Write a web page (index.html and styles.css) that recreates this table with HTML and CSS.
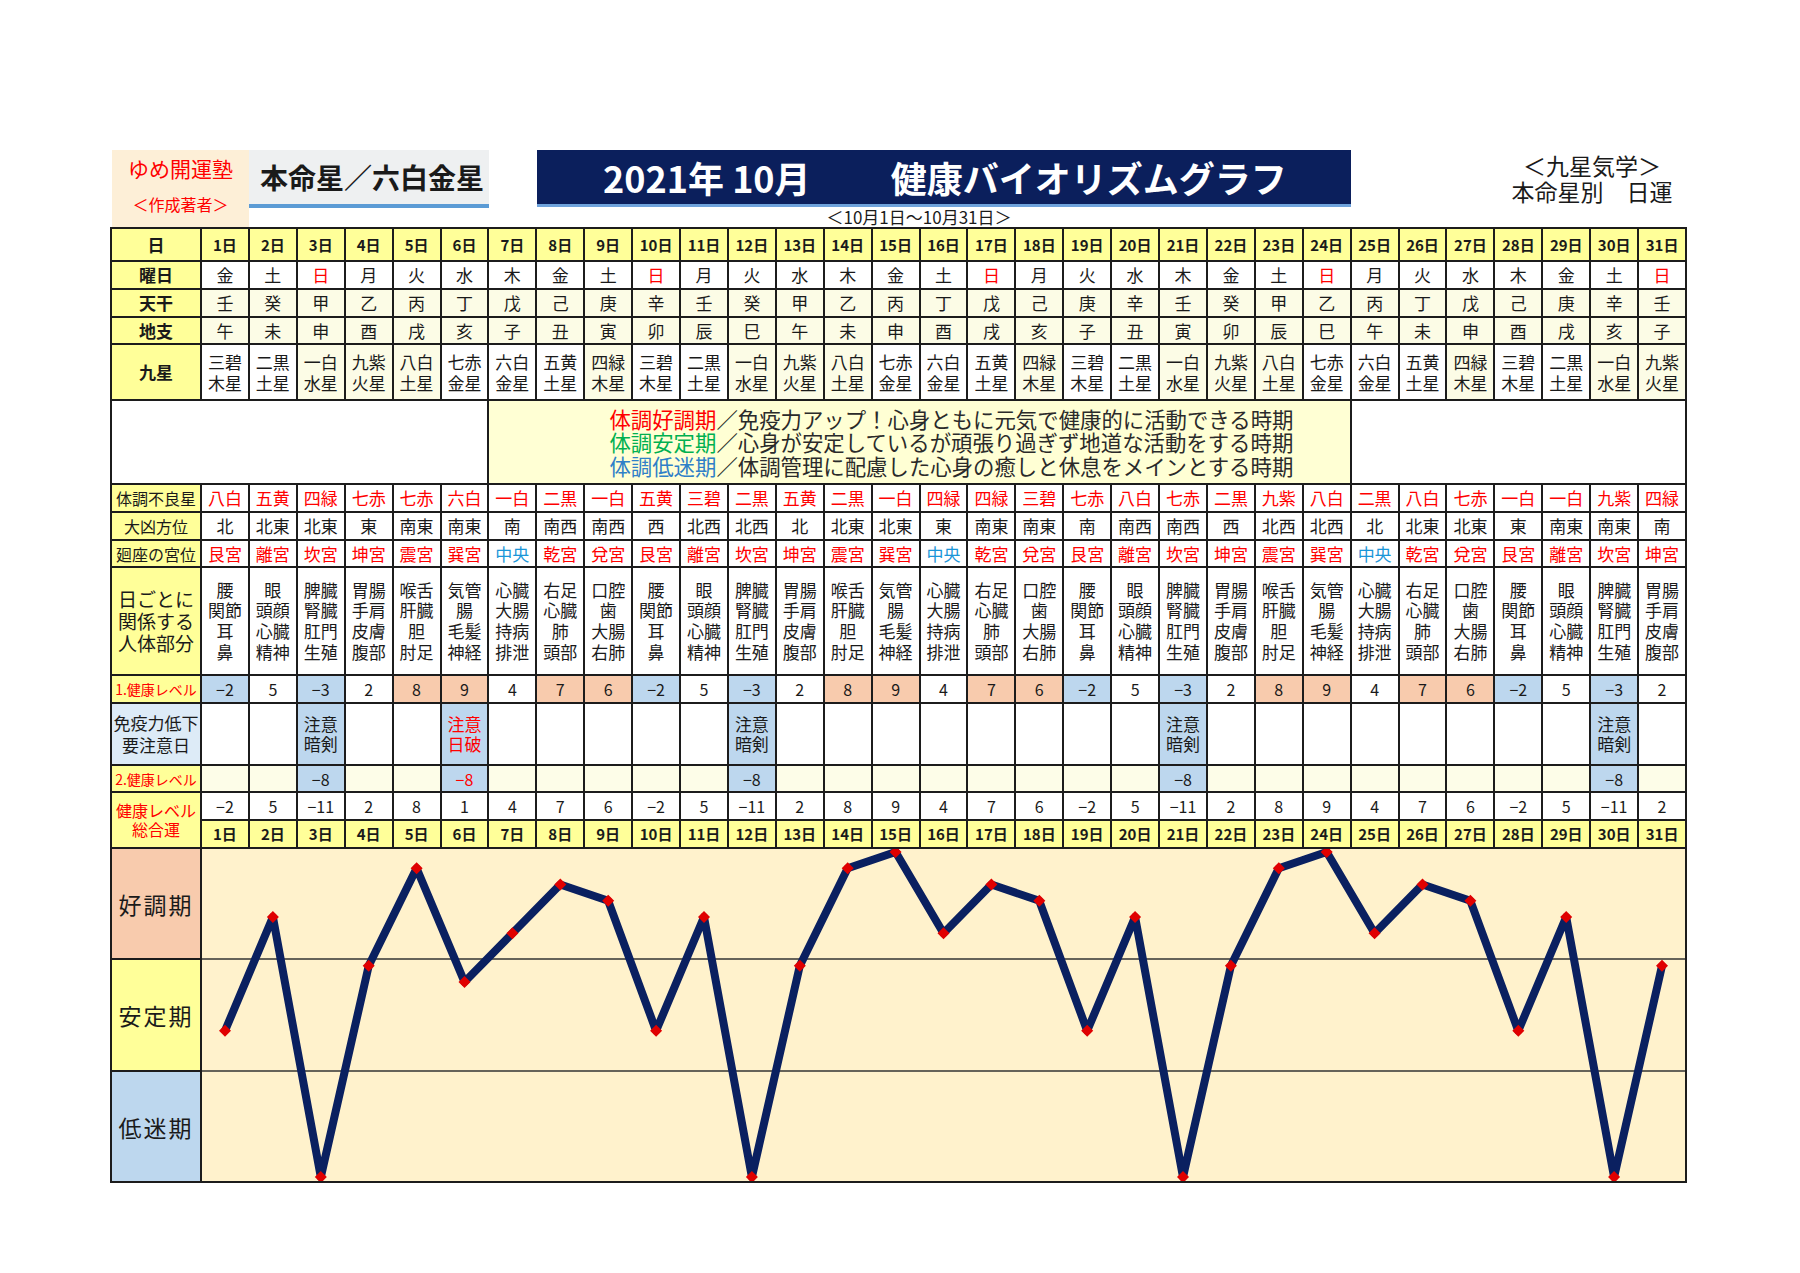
FILE: index.html
```html
<!DOCTYPE html>
<html lang="ja">
<head>
<meta charset="utf-8">
<title>健康バイオリズムグラフ</title>
<link rel="stylesheet" href="styles.css">
</head>
<body>
<div class="page">
  <div class="header">
    <div class="author"><div class="name">ゆめ開運塾</div><div class="role">＜作成著者＞</div></div>
    <div class="honmei">本命星／六白金星</div>
    <div class="title-col">
      <div class="title"><span class="ym">2021年 10月</span><span class="tname">健康バイオリズムグラフ</span></div>
      <div class="caption">＜10月1日～10月31日＞</div>
    </div>
    <div class="kyusei"><div>＜九星気学＞</div><div>本命星別　日運</div></div>
  </div>

  <div class="sheet">
    <!-- row 1 -->
    <div class="lb hd">日</div>
    <div class="dn">1日</div><div class="dn">2日</div><div class="dn">3日</div><div class="dn">4日</div><div class="dn">5日</div><div class="dn">6日</div><div class="dn">7日</div><div class="dn">8日</div><div class="dn">9日</div><div class="dn">10日</div><div class="dn">11日</div><div class="dn">12日</div><div class="dn">13日</div><div class="dn">14日</div><div class="dn">15日</div><div class="dn">16日</div><div class="dn">17日</div><div class="dn">18日</div><div class="dn">19日</div><div class="dn">20日</div><div class="dn">21日</div><div class="dn">22日</div><div class="dn">23日</div><div class="dn">24日</div><div class="dn">25日</div><div class="dn">26日</div><div class="dn">27日</div><div class="dn">28日</div><div class="dn">29日</div><div class="dn">30日</div><div class="dn">31日</div>
    <!-- row 2 -->
    <div class="lb hd">曜日</div>
    <div>金</div><div>土</div><div class="red">日</div><div>月</div><div>火</div><div>水</div><div>木</div>
    <div>金</div><div>土</div><div class="red">日</div><div>月</div><div>火</div><div>水</div><div>木</div>
    <div>金</div><div>土</div><div class="red">日</div><div>月</div><div>火</div><div>水</div><div>木</div>
    <div>金</div><div>土</div><div class="red">日</div><div>月</div><div>火</div><div>水</div><div>木</div>
    <div>金</div><div>土</div><div class="red">日</div>
    <!-- row 3 -->
    <div class="lb hd">天干</div>
    <div class="cr">壬</div><div class="cr">癸</div><div class="cr">甲</div><div class="cr">乙</div><div class="cr">丙</div><div class="cr">丁</div><div class="cr">戊</div><div class="cr">己</div><div class="cr">庚</div><div class="cr">辛</div>
    <div class="cr">壬</div><div class="cr">癸</div><div class="cr">甲</div><div class="cr">乙</div><div class="cr">丙</div><div class="cr">丁</div><div class="cr">戊</div><div class="cr">己</div><div class="cr">庚</div><div class="cr">辛</div>
    <div class="cr">壬</div><div class="cr">癸</div><div class="cr">甲</div><div class="cr">乙</div><div class="cr">丙</div><div class="cr">丁</div><div class="cr">戊</div><div class="cr">己</div><div class="cr">庚</div><div class="cr">辛</div>
    <div class="cr">壬</div>
    <!-- row 4 -->
    <div class="lb hd">地支</div>
    <div class="cr">午</div><div class="cr">未</div><div class="cr">申</div><div class="cr">酉</div><div class="cr">戌</div><div class="cr">亥</div><div class="cr">子</div><div class="cr">丑</div><div class="cr">寅</div><div class="cr">卯</div><div class="cr">辰</div><div class="cr">巳</div>
    <div class="cr">午</div><div class="cr">未</div><div class="cr">申</div><div class="cr">酉</div><div class="cr">戌</div><div class="cr">亥</div><div class="cr">子</div><div class="cr">丑</div><div class="cr">寅</div><div class="cr">卯</div><div class="cr">辰</div><div class="cr">巳</div>
    <div class="cr">午</div><div class="cr">未</div><div class="cr">申</div><div class="cr">酉</div><div class="cr">戌</div><div class="cr">亥</div><div class="cr">子</div>
    <!-- row 5 -->
    <div class="lb hd">九星</div>
    <div class="st">三碧<br>木星</div><div class="st">二黒<br>土星</div><div class="st cr">一白<br>水星</div><div class="st cr">九紫<br>火星</div><div class="st cr">八白<br>土星</div><div class="st">七赤<br>金星</div><div class="st">六白<br>金星</div><div class="st">五黄<br>土星</div><div class="st cr">四緑<br>木星</div>
    <div class="st">三碧<br>木星</div><div class="st">二黒<br>土星</div><div class="st cr">一白<br>水星</div><div class="st cr">九紫<br>火星</div><div class="st cr">八白<br>土星</div><div class="st">七赤<br>金星</div><div class="st">六白<br>金星</div><div class="st">五黄<br>土星</div><div class="st cr">四緑<br>木星</div>
    <div class="st">三碧<br>木星</div><div class="st">二黒<br>土星</div><div class="st cr">一白<br>水星</div><div class="st cr">九紫<br>火星</div><div class="st cr">八白<br>土星</div><div class="st">七赤<br>金星</div><div class="st">六白<br>金星</div><div class="st">五黄<br>土星</div><div class="st cr">四緑<br>木星</div>
    <div class="st">三碧<br>木星</div><div class="st">二黒<br>土星</div><div class="st cr">一白<br>水星</div><div class="st cr">九紫<br>火星</div>
    <!-- row 6 -->
    <div class="span7"></div>
    <div class="msg">
      <p><span class="good">体調好調期</span>／免疫力アップ！心身ともに元気で健康的に活動できる時期</p>
      <p><span class="stable">体調安定期</span>／心身が安定しているが頑張り過ぎず地道な活動をする時期</p>
      <p><span class="low">体調低迷期</span>／体調管理に配慮した心身の癒しと休息をメインとする時期</p>
    </div>
    <div class="span7"></div>
    <!-- row 7 -->
    <div class="lb sm">体調不良星</div>
    <div class="red">八白</div><div class="red">五黄</div><div class="red">四緑</div><div class="red">七赤</div><div class="red">七赤</div><div class="red">六白</div><div class="red">一白</div><div class="red">二黒</div><div class="red">一白</div><div class="red">五黄</div>
    <div class="red">三碧</div><div class="red">二黒</div><div class="red">五黄</div><div class="red">二黒</div><div class="red">一白</div><div class="red">四緑</div><div class="red">四緑</div><div class="red">三碧</div><div class="red">七赤</div><div class="red">八白</div>
    <div class="red">七赤</div><div class="red">二黒</div><div class="red">九紫</div><div class="red">八白</div><div class="red">二黒</div><div class="red">八白</div><div class="red">七赤</div><div class="red">一白</div><div class="red">一白</div><div class="red">九紫</div>
    <div class="red">四緑</div>
    <!-- row 8 -->
    <div class="lb sm">大凶方位</div>
    <div>北</div><div>北東</div><div>北東</div><div>東</div><div>南東</div><div>南東</div><div>南</div><div>南西</div><div>南西</div><div>西</div><div>北西</div><div>北西</div>
    <div>北</div><div>北東</div><div>北東</div><div>東</div><div>南東</div><div>南東</div><div>南</div><div>南西</div><div>南西</div><div>西</div><div>北西</div><div>北西</div>
    <div>北</div><div>北東</div><div>北東</div><div>東</div><div>南東</div><div>南東</div><div>南</div>
    <!-- row 9 -->
    <div class="lb sm">廻座の宮位</div>
    <div class="red">艮宮</div><div class="red">離宮</div><div class="red">坎宮</div><div class="red">坤宮</div><div class="red">震宮</div><div class="red">巽宮</div><div class="sky">中央</div><div class="red">乾宮</div><div class="red">兌宮</div>
    <div class="red">艮宮</div><div class="red">離宮</div><div class="red">坎宮</div><div class="red">坤宮</div><div class="red">震宮</div><div class="red">巽宮</div><div class="sky">中央</div><div class="red">乾宮</div><div class="red">兌宮</div>
    <div class="red">艮宮</div><div class="red">離宮</div><div class="red">坎宮</div><div class="red">坤宮</div><div class="red">震宮</div><div class="red">巽宮</div><div class="sky">中央</div><div class="red">乾宮</div><div class="red">兌宮</div>
    <div class="red">艮宮</div><div class="red">離宮</div><div class="red">坎宮</div><div class="red">坤宮</div>
    <!-- row 10 -->
    <div class="lb big">日ごとに<br>関係する<br>人体部分</div>
    <div class="body">腰<br>関節<br>耳<br>鼻</div><div class="body">眼<br>頭顔<br>心臓<br>精神</div><div class="body">脾臓<br>腎臓<br>肛門<br>生殖</div><div class="body">胃腸<br>手肩<br>皮膚<br>腹部</div><div class="body">喉舌<br>肝臓<br>胆<br>肘足</div><div class="body">気管<br>腸<br>毛髪<br>神経</div><div class="body">心臓<br>大腸<br>持病<br>排泄</div><div class="body">右足<br>心臓<br>肺<br>頭部</div><div class="body">口腔<br>歯<br>大腸<br>右肺</div>
    <div class="body">腰<br>関節<br>耳<br>鼻</div><div class="body">眼<br>頭顔<br>心臓<br>精神</div><div class="body">脾臓<br>腎臓<br>肛門<br>生殖</div><div class="body">胃腸<br>手肩<br>皮膚<br>腹部</div><div class="body">喉舌<br>肝臓<br>胆<br>肘足</div><div class="body">気管<br>腸<br>毛髪<br>神経</div><div class="body">心臓<br>大腸<br>持病<br>排泄</div><div class="body">右足<br>心臓<br>肺<br>頭部</div><div class="body">口腔<br>歯<br>大腸<br>右肺</div>
    <div class="body">腰<br>関節<br>耳<br>鼻</div><div class="body">眼<br>頭顔<br>心臓<br>精神</div><div class="body">脾臓<br>腎臓<br>肛門<br>生殖</div><div class="body">胃腸<br>手肩<br>皮膚<br>腹部</div><div class="body">喉舌<br>肝臓<br>胆<br>肘足</div><div class="body">気管<br>腸<br>毛髪<br>神経</div><div class="body">心臓<br>大腸<br>持病<br>排泄</div><div class="body">右足<br>心臓<br>肺<br>頭部</div><div class="body">口腔<br>歯<br>大腸<br>右肺</div>
    <div class="body">腰<br>関節<br>耳<br>鼻</div><div class="body">眼<br>頭顔<br>心臓<br>精神</div><div class="body">脾臓<br>腎臓<br>肛門<br>生殖</div><div class="body">胃腸<br>手肩<br>皮膚<br>腹部</div>
    <!-- row 11 -->
    <div class="lb lv">1.健康レベル</div>
    <div class="num lo">−2</div><div class="num">5</div><div class="num lo">−3</div><div class="num">2</div><div class="num hi">8</div><div class="num hi">9</div><div class="num">4</div><div class="num hi">7</div><div class="num hi">6</div>
    <div class="num lo">−2</div><div class="num">5</div><div class="num lo">−3</div><div class="num">2</div><div class="num hi">8</div><div class="num hi">9</div><div class="num">4</div><div class="num hi">7</div><div class="num hi">6</div>
    <div class="num lo">−2</div><div class="num">5</div><div class="num lo">−3</div><div class="num">2</div><div class="num hi">8</div><div class="num hi">9</div><div class="num">4</div><div class="num hi">7</div><div class="num hi">6</div>
    <div class="num lo">−2</div><div class="num">5</div><div class="num lo">−3</div><div class="num">2</div>
    <!-- row 12 -->
    <div class="imm-label">免疫力低下<br>要注意日</div>
    <div></div><div></div><div class="lo">注意<br>暗剣</div><div></div><div></div><div class="lo red">注意<br>日破</div><div></div><div></div><div></div><div></div><div></div><div class="lo">注意<br>暗剣</div><div></div><div></div><div></div><div></div>
    <div></div><div></div><div></div><div></div><div class="lo">注意<br>暗剣</div><div></div><div></div><div></div><div></div><div></div><div></div><div></div><div></div><div class="lo">注意<br>暗剣</div><div></div>
    <!-- row 13 -->
    <div class="lb lv">2.健康レベル</div>
    <div class="cr2"></div><div class="cr2"></div><div class="num lo">−8</div><div class="cr2"></div><div class="cr2"></div><div class="num lo red">−8</div><div class="cr2"></div><div class="cr2"></div><div class="cr2"></div><div class="cr2"></div><div class="cr2"></div><div class="num lo">−8</div><div class="cr2"></div><div class="cr2"></div><div class="cr2"></div><div class="cr2"></div>
    <div class="cr2"></div><div class="cr2"></div><div class="cr2"></div><div class="cr2"></div><div class="num lo">−8</div><div class="cr2"></div><div class="cr2"></div><div class="cr2"></div><div class="cr2"></div><div class="cr2"></div><div class="cr2"></div><div class="cr2"></div><div class="cr2"></div><div class="num lo">−8</div><div class="cr2"></div>
    <!-- row 14 -->
    <div class="lb total">健康レベル<br>総合運</div>
    <div class="num">−2</div><div class="num">5</div><div class="num">−11</div><div class="num">2</div><div class="num">8</div><div class="num">1</div><div class="num">4</div><div class="num">7</div><div class="num">6</div>
    <div class="num">−2</div><div class="num">5</div><div class="num">−11</div><div class="num">2</div><div class="num">8</div><div class="num">9</div><div class="num">4</div><div class="num">7</div><div class="num">6</div>
    <div class="num">−2</div><div class="num">5</div><div class="num">−11</div><div class="num">2</div><div class="num">8</div><div class="num">9</div><div class="num">4</div><div class="num">7</div><div class="num">6</div>
    <div class="num">−2</div><div class="num">5</div><div class="num">−11</div><div class="num">2</div>
    <!-- row 15 -->
    <div class="dn">1日</div><div class="dn">2日</div><div class="dn">3日</div><div class="dn">4日</div><div class="dn">5日</div><div class="dn">6日</div><div class="dn">7日</div><div class="dn">8日</div><div class="dn">9日</div><div class="dn">10日</div><div class="dn">11日</div><div class="dn">12日</div><div class="dn">13日</div><div class="dn">14日</div><div class="dn">15日</div><div class="dn">16日</div><div class="dn">17日</div><div class="dn">18日</div><div class="dn">19日</div><div class="dn">20日</div><div class="dn">21日</div><div class="dn">22日</div><div class="dn">23日</div><div class="dn">24日</div><div class="dn">25日</div><div class="dn">26日</div><div class="dn">27日</div><div class="dn">28日</div><div class="dn">29日</div><div class="dn">30日</div><div class="dn">31日</div>
    <!-- chart -->
    <div class="phase phase-good">好調期</div>
    <div class="chart">
      <svg viewBox="0 0 1483 332" preserveAspectRatio="none" width="1483" height="332">
        <defs>
          <marker id="dm" markerWidth="13" markerHeight="13" refX="6.5" refY="6.5" markerUnits="userSpaceOnUse">
            <path d="M6.5 0.5 L12.5 6.5 L6.5 12.5 L0.5 6.5 Z" fill="#e00000"/>
          </marker>
        </defs>
        <line x1="0" y1="110" x2="1483" y2="110" class="band"/>
        <line x1="0" y1="222" x2="1483" y2="222" class="band"/>
        <polyline class="bio" points="23,181.8 70.9,68 118.8,328 166.7,116.8 214.6,19.3 262.5,133 310.4,84.3 358.3,35.5 406.2,51.8 454.1,181.8 502,68 549.9,328 597.8,116.8 645.7,19.3 693.6,3 741.5,84.3 789.4,35.5 837.3,51.8 885.2,181.8 933.1,68 981,328 1028.9,116.8 1076.8,19.3 1124.7,3 1172.6,84.3 1220.5,35.5 1268.4,51.8 1316.3,181.8 1364.2,68 1412.1,328 1460,116.8"/>
      </svg>
    </div>
    <div class="phase phase-stable">安定期</div>
    <div class="phase phase-low">低迷期</div>
  </div>
</div>
</body>
</html>
```
FILE: styles.css
```css
* { box-sizing: border-box; }

body {
  margin: 0;
  background: #ffffff;
  font-family: "Noto Sans CJK JP", "Noto Sans", sans-serif;
  color: #1a1a1a;
}

.page {
  width: 1800px;
  padding: 150px 0 0 110px;
}

/* ---------- header ---------- */
.header {
  display: flex;
  height: 77px;
  width: 1577px;
}

.author {
  margin-left: 2px;
  width: 137px;
  height: 77px;
  background: #fdefd7;
  color: #ff0000;
  display: flex;
  flex-direction: column;
  align-items: center;
}
.author .name { font-size: 21px; line-height: 24px; margin-top: 6px; }
.author .role { font-size: 16px; line-height: 20px; margin-top: 14px; }

.honmei {
  width: 240px;
  height: 58px;
  background: #eef0f1;
  border-bottom: 4px solid #5b9bd5;
  font-size: 28px;
  font-weight: 700;
  line-height: 54px;
  padding-left: 11px;
  white-space: nowrap;
}

.title-col {
  margin-left: 48px;
  width: 814px;
  display: flex;
  flex-direction: column;
}
.title {
  height: 57px;
  background: #0b1f5c;
  border-bottom: 3px solid #6fa3dc;
  color: #ffffff;
  font-weight: 700;
  font-size: 36px;
  line-height: 54px;
  padding-left: 66px;
  white-space: nowrap;
}
.title .tname { margin-left: 80px; }
.caption {
  font-size: 17px;
  line-height: 20px;
  text-align: center;
  padding-right: 50px;
  color: #1a1a1a;
}

.kyusei {
  margin-left: auto;
  margin-right: 5px;
  width: 180px;
  text-align: center;
  font-size: 23px;
  line-height: 26px;
  padding-top: 2px;
  color: #1a1a1a;
}

/* ---------- sheet grid ---------- */
.sheet {
  display: grid;
  width: 1577px;
  grid-template-columns: 88px repeat(31, 1fr);
  grid-template-rows: 31px 26px 26px 25px 54px 82px 26px 26px 25px 106px 26px 60px 25px 26px 26px 109px 110px 109px;
  gap: 2px;
  padding: 2px;
  background: #1c1c1c;
}

.sheet > div {
  background: #ffffff;
  display: flex;
  align-items: center;
  justify-content: center;
  text-align: center;
  font-size: 17px;
  line-height: 20px;
  white-space: nowrap;
}

.lb { background: #ffff99 !important; font-size: 16px !important; }
.hd { font-weight: 700; font-size: 17px !important; }
.sm { font-size: 16px !important; }
.big { font-size: 19px !important; line-height: 22px !important; }
.lv { color: #ff0000; font-size: 14px !important; }
.total { color: #ff0000; font-size: 16px !important; line-height: 19px !important; grid-row: span 2; }

.dn { background: #ffff99 !important; font-weight: 700; font-size: 15px !important; }
.cr { background: #fcfce6 !important; }
.cr2 { background: #fdfde8 !important; }
.st { line-height: 21px !important; }
.red { color: #ff0000; }
.sky { color: #1a96d8; }
.body { line-height: 20.7px !important; }
.num { font-size: 16px !important; }
.lo { background: #bdd7ee !important; }
.hi { background: #f8cbad !important; }

.imm-label { background: #ddebf7 !important; font-size: 17px; line-height: 22px !important; }

.span7 { grid-column: span 7; }
.msg {
  grid-column: span 18;
  background: #ffffd4 !important;
  flex-direction: column;
  align-items: flex-start !important;
  padding-left: 120px;
  font-size: 21.4px !important;
  line-height: 23.5px !important;
  color: #2a2a2a;
}
.msg p { margin: 0; }
.good { color: #ff0000; }
.stable { color: #00b050; }
.low { color: #2f80c8; }

/* ---------- chart ---------- */
.phase { font-size: 23px !important; letter-spacing: 2px; }
.phase-good { grid-column: 1; grid-row: 16; background: #f8cbad !important; }
.phase-stable { grid-column: 1; grid-row: 17; background: #ffff99 !important; }
.phase-low { grid-column: 1; grid-row: 18; background: #bdd7ee !important; }

.chart {
  grid-column: 2 / -1;
  grid-row: 16 / 19;
  background: #fff2cc !important;
  display: block !important;
  overflow: hidden;
}
.chart svg { display: block; width: 100%; height: 100%; }
.band { stroke: #333333; stroke-width: 1.5; }
.bio {
  fill: none;
  stroke: #0a2060;
  stroke-width: 8;
  stroke-linejoin: round;
  marker-start: url(#dm);
  marker-mid: url(#dm);
  marker-end: url(#dm);
}
```
